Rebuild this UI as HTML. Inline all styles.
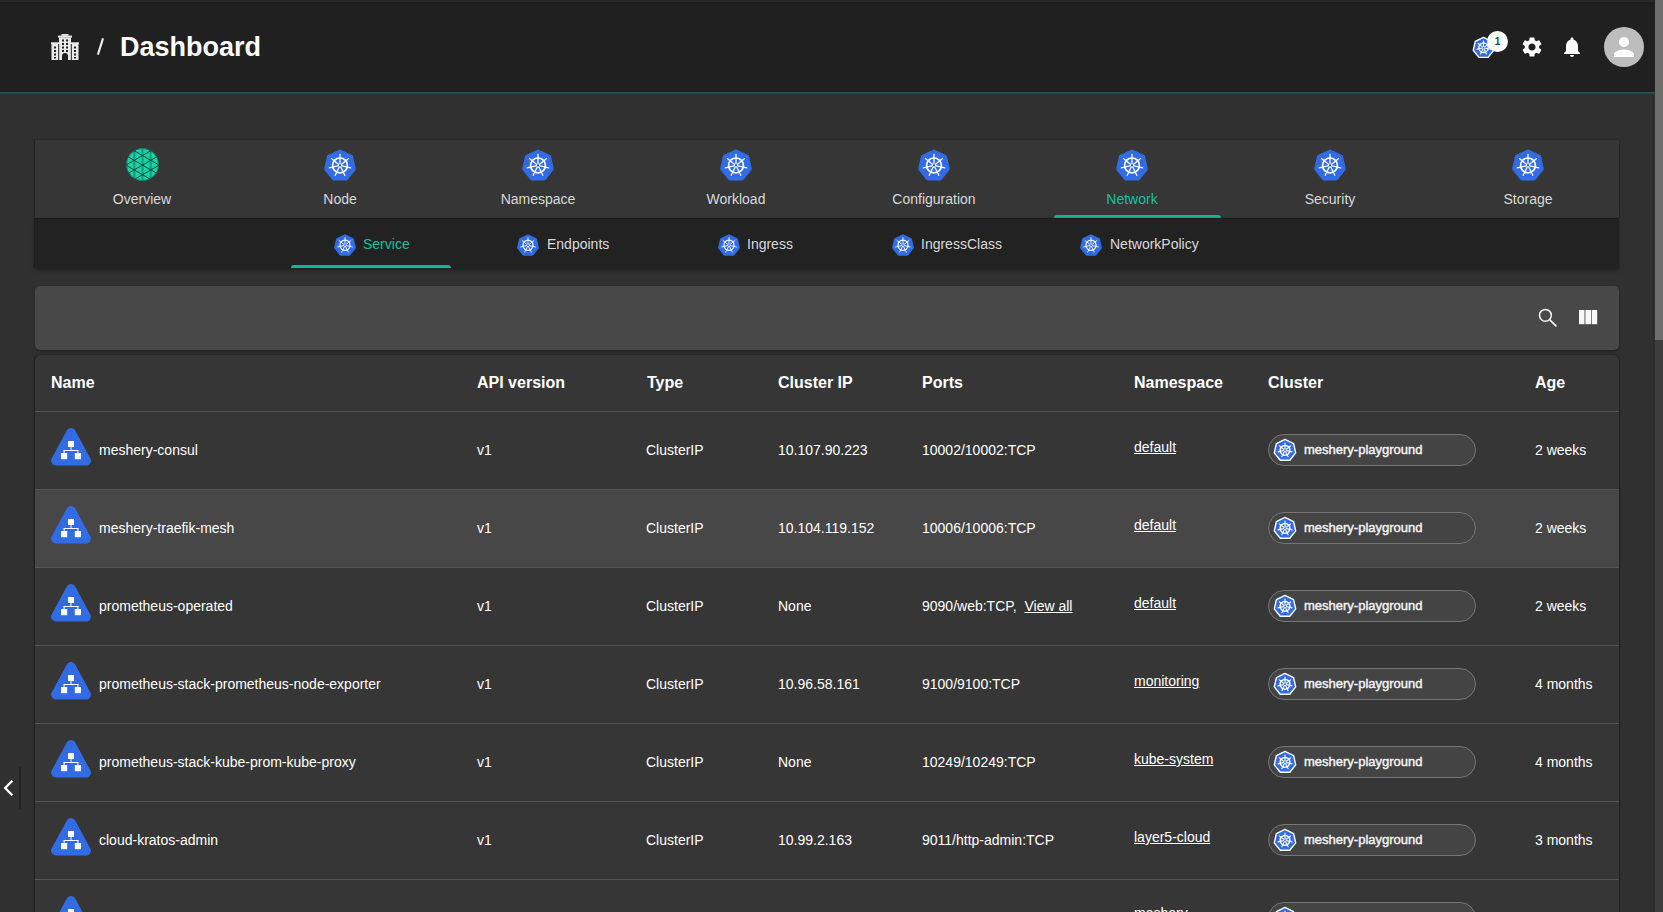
<!DOCTYPE html>
<html><head><meta charset="utf-8">
<style>
*{box-sizing:border-box;margin:0;padding:0}
html,body{width:1663px;height:912px;overflow:hidden;background:#303030;font-family:"Liberation Sans",sans-serif;color:#fff}
.abs{position:absolute}
#hdr{left:0;top:0;width:1655px;height:92px;background:#202020}
#hline{left:0;top:92px;width:1655px;height:2px;background:linear-gradient(#2b5953,#174540)}
#hshadow{left:0;top:94px;width:1655px;height:3px;background:linear-gradient(rgba(20,60,50,.5),rgba(48,48,48,0))}
#sbtrack{left:1655px;top:0;width:8px;height:912px;background:#3c3c3c}
#sbthumb{left:1655px;top:0;width:8px;height:340px;background:#6e6e6e}
.title{left:120px;top:30.5px;font-size:27px;font-weight:bold;line-height:32px;color:#fff}
.slash{left:96px;top:33px;font-size:22px;font-weight:bold;line-height:28px;color:#eee}
#tabs{left:35px;top:140px;width:1584px;height:78px;background:#363636;box-shadow:-1px 0 1px rgba(0,0,0,.3),1px 0 1px rgba(0,0,0,.2)}
#subtabs{left:35px;top:218px;width:1584px;height:50px;background:#222;border-top:1px solid #1a1a1a;box-shadow:0 2px 4px rgba(0,0,0,.35),-1px 0 1px rgba(0,0,0,.3)}
.tab{position:absolute;top:0;width:198px;height:78px;text-align:center}
.tab svg{position:absolute;left:83px;top:9px;width:32px;height:32px}
.tab span{position:absolute;left:0;width:198px;top:51px;font-size:14px;line-height:16px;color:#d9d9d9}
.tab.sel span{color:#1fbf9f}
.ind{background:#1ab394;border-radius:3px 3px 0 0}
.st{position:absolute;top:0;height:50px}
.st svg{position:absolute;top:16px;left:1px;width:22px;height:22px}
.st span{position:absolute;top:18px;font-size:14px;line-height:16px;color:#dadada;white-space:nowrap}
#tool{left:35px;top:286px;width:1584px;height:64px;background:#484848;border-radius:5px;box-shadow:0 2px 3px rgba(0,0,0,.3)}
#table{left:35px;top:355px;width:1584px;height:600px;background:#363636;border-radius:5px 5px 0 0;box-shadow:0 1px 3px rgba(0,0,0,.3),-1px 0 1px rgba(0,0,0,.3),1px 0 1px rgba(0,0,0,.25)}
.th{position:absolute;top:374px;font-size:16px;font-weight:bold;line-height:18px;color:#fff}
.sep{position:absolute;left:35px;width:1584px;height:1px;background:#555}
.row{position:absolute;left:35px;width:1584px;height:78px}
.td{position:absolute;font-size:14px;line-height:16px;color:#fff;white-space:nowrap}
.ln{text-decoration:underline}
.chip{position:absolute;left:1268px;width:208px;height:32px;border:1px solid #767676;border-radius:16px;background:#444}
.chip svg{position:absolute;left:4px;top:3px;width:24px;height:24px}
.chip span{position:absolute;left:35px;top:7px;font-size:13px;letter-spacing:0;-webkit-text-stroke:0.45px #f2f2f2;line-height:16px;color:#f2f2f2;white-space:nowrap}
.sicon{position:absolute;left:51px;width:40px;height:38px}
</style></head><body>
<svg width="0" height="0" style="position:absolute">
<defs>
<symbol id="k8s" viewBox="0 0 32 32">
<path d="M16.00 2.30 L27.26 7.72 L30.04 19.90 L22.25 29.67 L9.75 29.67 L1.96 19.90 L4.74 7.72 Z" fill="#326ce5" stroke="#326ce5" stroke-width="3.6" stroke-linejoin="round"/>
<g stroke="#fff" fill="none" stroke-linecap="round">
<circle cx="16" cy="16.4" r="7.4" stroke-width="1.7"/>
<g stroke-width="1.3"><path d="M16.00 15.20 L16.00 5.40"/><path d="M16.94 15.65 L24.60 9.54"/><path d="M17.17 16.67 L26.72 18.85"/><path d="M16.52 17.48 L20.77 26.31"/><path d="M15.48 17.48 L11.23 26.31"/><path d="M14.83 16.67 L5.28 18.85"/><path d="M15.06 15.65 L7.40 9.54"/></g></g>
<circle cx="16" cy="16.4" r="1.1" fill="#2a4f9a"/>
</symbol>
<symbol id="k8sc" viewBox="0 0 24 24">
<path d="M12.00 1.40 L20.60 5.54 L22.72 14.85 L16.77 22.31 L7.23 22.31 L1.28 14.85 L3.40 5.54 Z" fill="#326ce5" stroke="#fff" stroke-width="1.4" stroke-linejoin="round"/>
<g stroke="#fff" fill="none" stroke-linecap="round">
<circle cx="12" cy="12.3" r="4.9" stroke-width="1.5"/>
<g stroke-width="1.1"><path d="M12 12.3 L12.00 5.10"/><path d="M12 12.3 L17.63 7.81"/><path d="M12 12.3 L19.02 13.90"/><path d="M12 12.3 L15.12 18.79"/><path d="M12 12.3 L8.88 18.79"/><path d="M12 12.3 L4.98 13.90"/><path d="M12 12.3 L6.37 7.81"/></g></g>
<circle cx="12" cy="12.3" r="1" fill="#326ce5"/>
</symbol>
<symbol id="svc" viewBox="0 0 40 38">
<path d="M20 4.9 L35.1 32.7 L4.9 32.7 Z" fill="#326ce5" stroke="#326ce5" stroke-width="9.6" stroke-linejoin="round"/>
<g fill="#fff">
<rect x="17" y="13" width="6" height="6"/>
<rect x="10" y="25" width="6.2" height="6.2"/>
<rect x="23.8" y="25" width="6.2" height="6.2"/>
<rect x="19.5" y="19" width="1" height="3.5"/>
<rect x="12.6" y="22" width="14.8" height="1"/>
<rect x="12.6" y="22" width="1" height="3"/>
<rect x="26.4" y="22" width="1" height="3"/>
</g>
</symbol>
</defs>
</svg>

<div id="hdr" class="abs"></div>
<div class="abs" style="left:0;top:0;width:1655px;height:2px;background:#282828"></div><div class="abs" style="left:0;top:2px;width:1655px;height:2px;background:#1c1c1c"></div>
<div id="hline" class="abs"></div>
<div id="hshadow" class="abs"></div>
<div class="abs" style="left:1653px;top:94px;width:1px;height:818px;background:#2a2a2a"></div>
<div id="sbtrack" class="abs"></div>
<div id="sbthumb" class="abs"></div>

<!-- building icon -->
<svg class="abs" style="left:50px;top:33px" width="30" height="28" viewBox="0 0 30 28">
<g fill="#eaeaea">
<rect x="11.5" y="1" width="7" height="1.8"/>
<rect x="8" y="2.6" width="14" height="2"/>
<rect x="9" y="4.5" width="12" height="22.5"/>
<rect x="1" y="9.3" width="8" height="1.8"/>
<rect x="21" y="9.3" width="8" height="1.8"/>
<rect x="1.5" y="11" width="7" height="16"/>
<rect x="21.5" y="11" width="7" height="16"/>
</g>
<g fill="#202020">
<rect x="12" y="6.5" width="2" height="2"/><rect x="16" y="6.5" width="2" height="2"/>
<rect x="12" y="10" width="2" height="2"/><rect x="16" y="10" width="2" height="2"/>
<rect x="12" y="13.5" width="2" height="2"/><rect x="16" y="13.5" width="2" height="2"/>
<rect x="12" y="17" width="2" height="2"/><rect x="16" y="17" width="2" height="2"/>
<path d="M12 27 L12 23 Q12 20 15 20 Q18 20 18 23 L18 27 Z"/>
<rect x="4" y="13.5" width="2" height="2"/><rect x="4" y="17" width="2" height="2"/><rect x="4" y="20.5" width="2" height="2"/><rect x="4" y="24" width="2" height="1.5"/>
<rect x="24" y="13.5" width="2" height="2"/><rect x="24" y="17" width="2" height="2"/><rect x="24" y="20.5" width="2" height="2"/><rect x="24" y="24" width="2" height="1.5"/>
<rect x="8.4" y="11" width="0.8" height="16"/><rect x="20.8" y="11" width="0.8" height="16"/>
</g>
</svg>
<svg class="abs" style="left:90px;top:30px" width="20" height="30"><path d="M7.9 24.6 L13 8.4" stroke="#f0f0f0" stroke-width="2.1"/></svg>
<div class="abs title">Dashboard</div>

<!-- header right icons -->
<svg class="abs" style="left:1472px;top:36px;width:23px;height:23px"><use href="#k8sc"/></svg>
<div class="abs" style="left:1487px;top:30.5px;width:21px;height:21px;border-radius:50%;background:#fff;color:#0e4f60;font-size:10px;font-weight:bold;line-height:21px;text-align:center">1</div>
<svg class="abs" style="left:1520px;top:35px" width="24" height="24" viewBox="0 0 24 24"><path fill="#fff" d="M19.14 12.94c.04-.3.06-.61.06-.94 0-.32-.02-.64-.07-.94l2.03-1.58a.49.49 0 0 0 .12-.61l-1.92-3.32a.488.488 0 0 0-.59-.22l-2.39.96c-.5-.38-1.03-.7-1.62-.94l-.36-2.54a.484.484 0 0 0-.48-.41h-3.84c-.24 0-.43.17-.47.41l-.36 2.54c-.59.24-1.13.57-1.62.94l-2.39-.96c-.22-.08-.47 0-.59.22L2.74 8.87c-.12.21-.08.47.12.61l2.03 1.58c-.05.3-.09.63-.09.94s.02.64.07.94l-2.03 1.58a.49.49 0 0 0-.12.61l1.92 3.32c.12.22.37.29.59.22l2.39-.96c.5.38 1.03.7 1.62.94l.36 2.54c.05.24.24.41.48.41h3.84c.24 0 .44-.17.47-.41l.36-2.54c.59-.24 1.13-.56 1.62-.94l2.39.96c.22.08.47 0 .59-.22l1.92-3.32c.12-.22.07-.47-.12-.61l-2.01-1.58zM12 15.6c-1.98 0-3.6-1.62-3.6-3.6s1.62-3.6 3.6-3.6 3.6 1.62 3.6 3.6-1.62 3.6-3.6 3.6z"/></svg>
<svg class="abs" style="left:1560px;top:35px" width="24" height="24" viewBox="0 0 24 24"><path fill="#fff" d="M12 22c1.1 0 2-.9 2-2h-4c0 1.1.89 2 2 2zm6-6v-5c0-3.07-1.64-5.64-4.5-6.32V4c0-.83-.67-1.5-1.5-1.5s-1.5.67-1.5 1.5v.68C7.63 5.36 6 7.92 6 11v5l-2 2v1h16v-1l-2-2z"/></svg>
<div class="abs" style="left:1604px;top:27px;width:40px;height:40px;border-radius:50%;background:#bdbdbd"></div>
<svg class="abs" style="left:1609px;top:32px" width="30" height="30" viewBox="0 0 24 24"><path fill="#fff" d="M12 12c2.21 0 4-1.79 4-4s-1.79-4-4-4-4 1.79-4 4 1.79 4 4 4zm0 2c-2.67 0-8 1.34-8 4v2h16v-2c0-2.66-5.33-4-8-4z"/></svg>

<!-- tabs -->
<div id="tabs" class="abs"></div>
<div class="abs" style="left:43px;top:140px;width:1584px;height:78px">
 <div class="tab" style="left:0"><svg viewBox="0 0 33 33" style="left:82.7px;top:8.3px;width:33px;height:33px"><defs><clipPath id="ovc"><circle cx="16.5" cy="16.5" r="16.2"/></clipPath></defs><g clip-path="url(#ovc)"><rect width="33" height="33" fill="#19d3a5"/><g fill="#10a08a"><rect x="7.20" y="0" width="2.2" height="33"/><rect x="15.40" y="0" width="2.2" height="33"/><rect x="23.60" y="0" width="2.2" height="33"/></g><g stroke="#0a3f37" stroke-width="0.95"><path d="M-5 -33.71 L38 -8.89"/><path d="M-5 -8.89 L38 -33.71"/><path d="M-5 -24.11 L38 0.71"/><path d="M-5 0.71 L38 -24.11"/><path d="M-5 -14.51 L38 10.31"/><path d="M-5 10.31 L38 -14.51"/><path d="M-5 -4.91 L38 19.91"/><path d="M-5 19.91 L38 -4.91"/><path d="M-5 4.69 L38 29.51"/><path d="M-5 29.51 L38 4.69"/><path d="M-5 14.29 L38 39.11"/><path d="M-5 39.11 L38 14.29"/><path d="M-5 23.89 L38 48.71"/><path d="M-5 48.71 L38 23.89"/><path d="M-5 33.49 L38 58.31"/><path d="M-5 58.31 L38 33.49"/><path d="M-5 43.09 L38 67.91"/><path d="M-5 67.91 L38 43.09"/></g></g><circle cx="16.5" cy="16.5" r="16" fill="none" stroke="#0d5a4c" stroke-width="0.6"/></svg><span>Overview</span></div>
 <div class="tab" style="left:198px"><svg><use href="#k8s"/></svg><span>Node</span></div>
 <div class="tab" style="left:396px"><svg><use href="#k8s"/></svg><span>Namespace</span></div>
 <div class="tab" style="left:594px"><svg><use href="#k8s"/></svg><span>Workload</span></div>
 <div class="tab" style="left:792px"><svg><use href="#k8s"/></svg><span>Configuration</span></div>
 <div class="tab sel" style="left:990px"><svg><use href="#k8s"/></svg><span>Network</span></div>
 <div class="tab" style="left:1188px"><svg><use href="#k8s"/></svg><span>Security</span></div>
 <div class="tab" style="left:1386px"><svg><use href="#k8s"/></svg><span>Storage</span></div>
</div>
<div class="abs ind" style="left:1054px;top:215px;width:167px;height:3px"></div>

<div id="subtabs" class="abs"></div>
<div class="abs" style="left:0;top:218px;width:1663px;height:50px">
 <div class="st" style="left:333px"><svg><use href="#k8s"/></svg><span style="left:30px;color:#1fbf9f">Service</span></div>
 <div class="st" style="left:516px"><svg><use href="#k8s"/></svg><span style="left:31px">Endpoints</span></div>
 <div class="st" style="left:717px"><svg><use href="#k8s"/></svg><span style="left:30px">Ingress</span></div>
 <div class="st" style="left:891px"><svg><use href="#k8s"/></svg><span style="left:30px">IngressClass</span></div>
 <div class="st" style="left:1079px"><svg><use href="#k8s"/></svg><span style="left:31px">NetworkPolicy</span></div>
</div>
<div class="abs ind" style="left:291px;top:265px;width:160px;height:3px"></div>

<!-- toolbar -->
<div id="tool" class="abs"></div>
<svg class="abs" style="left:1530px;top:300px" width="32" height="32"><circle cx="15.4" cy="15.3" r="5.9" stroke="#f4f4f4" stroke-width="1.5" fill="none"/><path d="M19.6 19.6 L25.9 25.9" stroke="#f4f4f4" stroke-width="1.7" stroke-linecap="round"/></svg>
<svg class="abs" style="left:1579px;top:310px" width="19" height="15"><rect x="0" y="0" width="5.5" height="14.2" fill="#f8f8f8"/><rect x="6.4" y="0" width="5.9" height="14.2" fill="#f8f8f8"/><rect x="13" y="0" width="5.2" height="14.2" fill="#f8f8f8"/></svg>

<div class="abs" style="left:19px;top:767px;width:2px;height:42px;background:rgba(0,0,0,.22);filter:blur(0.4px)"></div>
<svg class="abs" style="left:0;top:776px" width="20" height="24" viewBox="0 0 20 24"><path d="M12.3 4.8 L5.2 12 L12.3 19.2" stroke="#fff" stroke-width="2.3" fill="none"/></svg>
<!-- table -->
<div id="table" class="abs"></div>
<div class="th" style="left:51px">Name</div>
<div class="th" style="left:477px">API version</div>
<div class="th" style="left:647px">Type</div>
<div class="th" style="left:778px">Cluster IP</div>
<div class="th" style="left:922px">Ports</div>
<div class="th" style="left:1134px">Namespace</div>
<div class="th" style="left:1268px">Cluster</div>
<div class="th" style="left:1535px">Age</div>
<div class="sep" style="top:411px"></div>
<svg class="sicon" style="top:428px"><use href="#svc"/></svg>
<div class="td" style="left:99px;top:442px">meshery-consul</div>
<div class="td" style="left:477px;top:442px">v1</div>
<div class="td" style="left:646px;top:442px">ClusterIP</div>
<div class="td" style="left:778px;top:442px">10.107.90.223</div>
<div class="td" style="left:922px;top:442px">10002/10002:TCP</div>
<div class="td" style="left:5px;top:442px;left:1535px">2 weeks</div>
<div class="td ln" style="left:1134px;top:439px">default</div>
<div class="chip" style="top:434px"><svg><use href="#k8sc"/></svg><span>meshery-playground</span></div>
<div class="sep" style="top:489px"></div>
<div class="row" style="top:490px;height:77px;background:#474747"></div>
<svg class="sicon" style="top:506px"><use href="#svc"/></svg>
<div class="td" style="left:99px;top:520px">meshery-traefik-mesh</div>
<div class="td" style="left:477px;top:520px">v1</div>
<div class="td" style="left:646px;top:520px">ClusterIP</div>
<div class="td" style="left:778px;top:520px">10.104.119.152</div>
<div class="td" style="left:922px;top:520px">10006/10006:TCP</div>
<div class="td" style="left:5px;top:520px;left:1535px">2 weeks</div>
<div class="td ln" style="left:1134px;top:517px">default</div>
<div class="chip" style="top:512px"><svg><use href="#k8sc"/></svg><span>meshery-playground</span></div>
<div class="sep" style="top:567px"></div>
<svg class="sicon" style="top:584px"><use href="#svc"/></svg>
<div class="td" style="left:99px;top:598px">prometheus-operated</div>
<div class="td" style="left:477px;top:598px">v1</div>
<div class="td" style="left:646px;top:598px">ClusterIP</div>
<div class="td" style="left:778px;top:598px">None</div>
<div class="td" style="left:922px;top:598px">9090/web:TCP,&nbsp; <span class="ln">View all</span></div>
<div class="td" style="left:5px;top:598px;left:1535px">2 weeks</div>
<div class="td ln" style="left:1134px;top:595px">default</div>
<div class="chip" style="top:590px"><svg><use href="#k8sc"/></svg><span>meshery-playground</span></div>
<div class="sep" style="top:645px"></div>
<svg class="sicon" style="top:662px"><use href="#svc"/></svg>
<div class="td" style="left:99px;top:676px">prometheus-stack-prometheus-node-exporter</div>
<div class="td" style="left:477px;top:676px">v1</div>
<div class="td" style="left:646px;top:676px">ClusterIP</div>
<div class="td" style="left:778px;top:676px">10.96.58.161</div>
<div class="td" style="left:922px;top:676px">9100/9100:TCP</div>
<div class="td" style="left:5px;top:676px;left:1535px">4 months</div>
<div class="td ln" style="left:1134px;top:673px">monitoring</div>
<div class="chip" style="top:668px"><svg><use href="#k8sc"/></svg><span>meshery-playground</span></div>
<div class="sep" style="top:723px"></div>
<svg class="sicon" style="top:740px"><use href="#svc"/></svg>
<div class="td" style="left:99px;top:754px">prometheus-stack-kube-prom-kube-proxy</div>
<div class="td" style="left:477px;top:754px">v1</div>
<div class="td" style="left:646px;top:754px">ClusterIP</div>
<div class="td" style="left:778px;top:754px">None</div>
<div class="td" style="left:922px;top:754px">10249/10249:TCP</div>
<div class="td" style="left:5px;top:754px;left:1535px">4 months</div>
<div class="td ln" style="left:1134px;top:751px">kube-system</div>
<div class="chip" style="top:746px"><svg><use href="#k8sc"/></svg><span>meshery-playground</span></div>
<div class="sep" style="top:801px"></div>
<svg class="sicon" style="top:818px"><use href="#svc"/></svg>
<div class="td" style="left:99px;top:832px">cloud-kratos-admin</div>
<div class="td" style="left:477px;top:832px">v1</div>
<div class="td" style="left:646px;top:832px">ClusterIP</div>
<div class="td" style="left:778px;top:832px">10.99.2.163</div>
<div class="td" style="left:922px;top:832px">9011/http-admin:TCP</div>
<div class="td" style="left:5px;top:832px;left:1535px">3 months</div>
<div class="td ln" style="left:1134px;top:829px">layer5-cloud</div>
<div class="chip" style="top:824px"><svg><use href="#k8sc"/></svg><span>meshery-playground</span></div>
<div class="sep" style="top:879px"></div>
<svg class="sicon" style="top:896px"><use href="#svc"/></svg>
<div class="td ln" style="left:1134px;top:905px">meshery</div>
<div class="chip" style="top:902px"><svg><use href="#k8sc"/></svg><span>meshery-playground</span></div>
</body></html>
